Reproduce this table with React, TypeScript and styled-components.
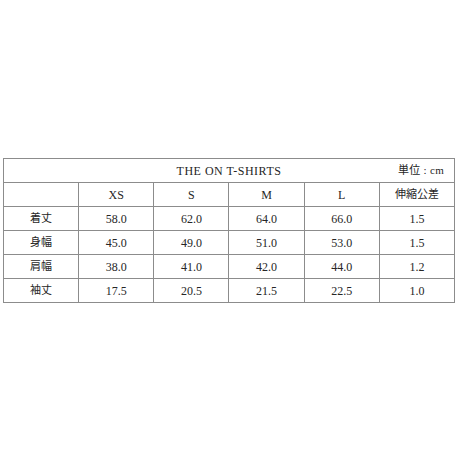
import React from 'react'
import styled, { createGlobalStyle } from 'styled-components'

const GlobalStyle = createGlobalStyle`
	html, body {
		margin: 0;
		padding: 0;
		background: #ffffff;
	}
`

const StyledPage = styled('div')`
	width: 460px;
	height: 460px;
	padding: 158px 0 0 3px;
	box-sizing: border-box;
	font-family: "Liberation Serif", "Noto Sans CJK JP", serif;
	color: #262626;
`

const StyledTable = styled('table')`
	width: 452px;
	border-collapse: collapse;
	table-layout: fixed;
	font-size: 12px;
`

const StyledCell = styled('td')<{ $small?: boolean }>`
	height: 23px;
	padding: 0;
	border: 1px solid #8c8c8c;
	text-align: center;
	vertical-align: middle;
	font-size: ${({ $small }) => ($small ? '11px' : '12px')};
	line-height: 1;
`

const StyledTitleRow = styled('div')`
	display: grid;
	grid-template-columns: 1fr auto 1fr;
	align-items: center;
	padding: 0 10px;
`

const StyledTitle = styled('span')`
	grid-column: 2;
	letter-spacing: 0.5px;
`

const StyledUnit = styled('span')`
	grid-column: 3;
	justify-self: end;
	font-size: 11px;
	letter-spacing: 0.3px;
`

const sizes = ['XS', 'S', 'M', 'L']

const rows = [
	{ label: '着丈', values: ['58.0', '62.0', '64.0', '66.0'], tolerance: '1.5' },
	{ label: '身幅', values: ['45.0', '49.0', '51.0', '53.0'], tolerance: '1.5' },
	{ label: '肩幅', values: ['38.0', '41.0', '42.0', '44.0'], tolerance: '1.2' },
	{ label: '袖丈', values: ['17.5', '20.5', '21.5', '22.5'], tolerance: '1.0' },
]

export default function App() {
	return (
		<StyledPage>
			<GlobalStyle />
			<StyledTable>
				<colgroup>
					{Array.from({ length: 6 }).map((_, i) => (
						<col key={i} />
					))}
				</colgroup>
				<tbody>
					<tr>
						<StyledCell colSpan={6}>
							<StyledTitleRow>
								<StyledTitle>THE ON T-SHIRTS</StyledTitle>
								<StyledUnit>単位 : cm</StyledUnit>
							</StyledTitleRow>
						</StyledCell>
					</tr>
					<tr>
						<StyledCell />
						{sizes.map((s) => (
							<StyledCell key={s}>{s}</StyledCell>
						))}
						<StyledCell $small>伸縮公差</StyledCell>
					</tr>
					{rows.map((r) => (
						<tr key={r.label}>
							<StyledCell $small>{r.label}</StyledCell>
							{r.values.map((v, i) => (
								<StyledCell key={i}>{v}</StyledCell>
							))}
							<StyledCell>{r.tolerance}</StyledCell>
						</tr>
					))}
				</tbody>
			</StyledTable>
		</StyledPage>
	)
}
